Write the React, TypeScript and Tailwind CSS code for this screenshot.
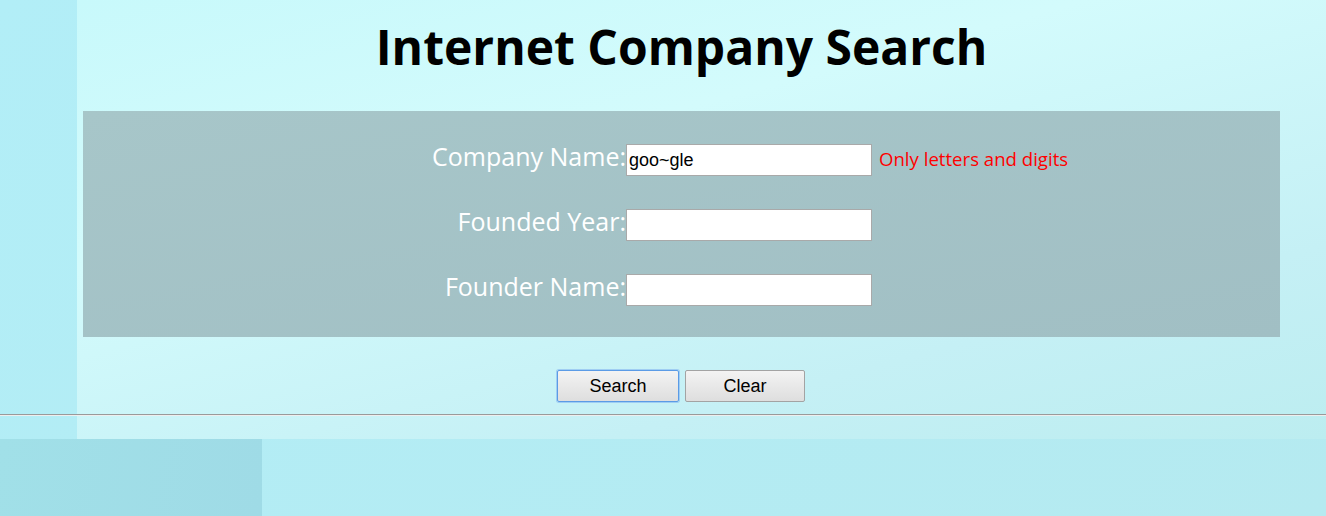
import React from "react";

export default function App() {
  return (
    <div className="h-screen w-full overflow-hidden font-['Open_Sans','Noto_Sans',sans-serif] [background-image:linear-gradient(165deg,#c8f9fb_0%,#d3fbfc_35%,#c5f0f5_75%,#bcedf0_100%),linear-gradient(100deg,#a1e0e8,#9fdbe6),linear-gradient(135deg,#b2eef7,#b5eaf0)] [background-position:77px_0,0_439px,0_0] [background-size:calc(100%_-_77px)_439px,262px_77px,100%_100%] [background-repeat:no-repeat]">
      <div className="ml-[83px] w-[1197px]">
        <h1 className="pt-[15px] text-center text-[48px] font-bold leading-[64px] text-black">
          Internet Company Search
        </h1>
        <div className="mt-[32px] h-[226px] bg-[linear-gradient(170deg,#a7c6c9,#a1bfc4)] pt-[33px]">
          <div className="grid grid-cols-[543px_246px_1fr] gap-y-[33px]">
            <FormRow label="Company Name:" value="goo~gle" error="Only letters and digits" />
            <FormRow label="Founded Year:" value="" />
            <FormRow label="Founder Name:" value="" />
          </div>
        </div>
        <div className="mt-[33px] flex gap-[6px] pl-[474px] font-['Liberation_Sans',Arial,sans-serif] text-[18px] text-black">
          <button className="h-[32px] w-[122px] rounded-[2px] border border-[#5b9be6] bg-[linear-gradient(#f3f3f3,#dedede)] shadow-[0_0_0_1px_rgba(120,170,240,0.5)]">
            Search
          </button>
          <button className="h-[32px] w-[120px] rounded-[2px] border border-[#a3a3a3] bg-[linear-gradient(#f3f3f3,#dedede)]">
            Clear
          </button>
        </div>
      </div>
      <hr className="mt-[12px] h-0 w-full border-0 border-t border-b border-t-[#9a9a9a] border-b-[#eeeeee]" />
    </div>
  );
}

function FormRow({ label, value, error }: { label: string; value: string; error?: string }) {
  return (
    <>
      <div className="flex h-[32px] items-center justify-end pb-[7px] text-[25px] leading-none text-white">
        {label}
      </div>
      <input
        readOnly
        value={value}
        className="h-[32px] w-[246px] border border-[#a9a9a9] bg-white px-[2px] font-['Liberation_Sans',Arial,sans-serif] text-[18px] text-black outline-none"
      />
      <div className="flex h-[32px] items-center pb-[2px] pl-[7px] text-[18.6px] leading-none text-[#ff0000]">
        {error ?? ""}
      </div>
    </>
  );
}
